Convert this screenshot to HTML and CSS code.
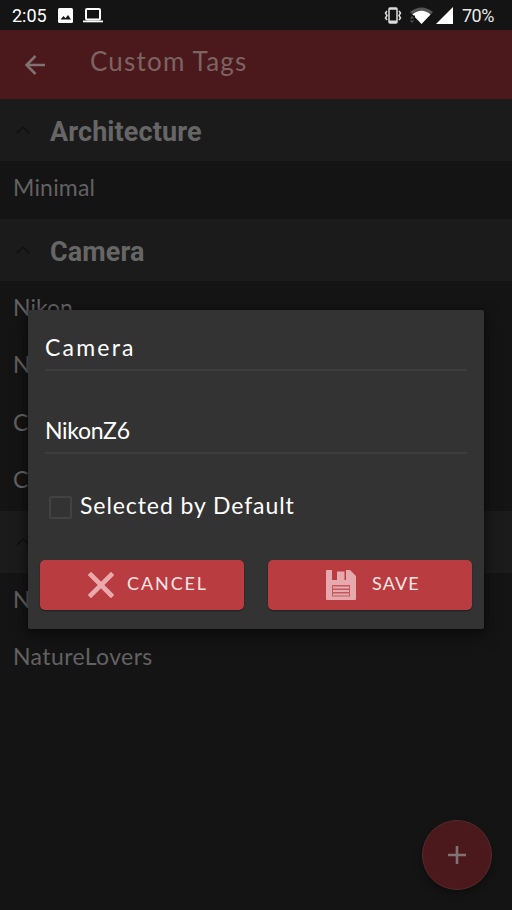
FILE: index.html
```html
<!DOCTYPE html>
<html lang="en">
<head>
<meta charset="utf-8">
<title>Custom Tags</title>
<link rel="stylesheet" href="styles.css">
</head>
<body>
<div class="status">
  <span class="clock">2:05</span>
  <svg class="photo" width="15" height="15" viewBox="0 0 15 15"><rect width="15" height="15" rx="1.5" fill="#fff"/><path d="M2.5 11.5 5.5 8l2 2.2L10 7l3 4.500z" fill="#151515"/></svg>
  <svg class="laptop" width="20" height="15" viewBox="0 0 20 15"><rect x="3" y="1" width="14" height="10.500" rx="1" fill="none" stroke="#fff" stroke-width="2"/><path d="M0 12.500h20v1.800H0z" fill="#fff"/></svg>
  <svg class="vibrate" width="18" height="17" viewBox="0 0 18 17"><rect x="5" y="1" width="8" height="15" rx="1" fill="none" stroke="#ddd" stroke-width="1.500"/><path d="M5 13.500h8V16H5zM5 1h8v1.800H5z" fill="#ddd"/><path d="M3 4 1.500 6 3 8.500 1.500 11 3 13M15 4l1.500 2L15 8.500l1.500 2.500L15 13" fill="none" stroke="#ddd" stroke-width="1.500"/></svg>
  <svg class="wifi" width="23" height="17" viewBox="0 0 23 17"><path d="M0 5Q11.500-4 23 5L11.500 17z" fill="#555"/><path d="M2.500 7.500Q11.500 0 20.500 7.500L11.500 17z" fill="#fff"/><path d="M0 8.500h5v8H0z" fill="#141414"/><path d="M0 11.500h4L2 9zM0 13.500h4L2 16z" fill="#555"/></svg>
  <svg class="signal" width="17" height="17" viewBox="0 0 17 17"><path d="M17 0v17H0z" fill="#fff"/></svg>
  <span class="battery">70%</span>
</div>
<header class="appbar">
  <svg class="back" width="20" height="20" viewBox="0 0 20 20"><path d="M20 10H2M10.500 1 1.500 10l9 9" fill="none" stroke="#807172" stroke-width="2.500"/></svg>
  <h1>Custom Tags</h1>
</header>
<main>
  <h2><svg width="14" height="8" viewBox="0 0 14 8"><path d="m1 7 6-6 6 6"/></svg><span>Architecture</span></h2>
  <p class="tag"><span class="minimal">Minimal</span></p>
  <h2><svg width="14" height="8" viewBox="0 0 14 8"><path d="m1 7 6-6 6 6"/></svg><span>Camera</span></h2>
  <p class="tag"><span class="nikon">Nikon</span></p>
  <p class="tag"><span>N</span></p>
  <p class="tag"><span>C</span></p>
  <p class="tag"><span>C</span></p>
  <h2><svg width="14" height="8" viewBox="0 0 14 8"><path d="m1 7 6-6 6 6"/></svg></h2>
  <p class="tag"><span>N</span></p>
  <p class="tag"><span>NatureLovers</span></p>
</main>
<div class="fab"><svg width="18" height="18" viewBox="0 0 18 18"><path d="M9 0v18M0 9h18" stroke="#837273" stroke-width="2.600"/></svg></div>
<section class="dialog">
  <div class="field"><span class="category">Camera</span></div>
  <div class="field second"><span class="name">NikonZ6</span></div>
  <div class="check"><i></i><span>Selected by Default</span></div>
  <div class="actions">
    <div class="button cancel"><svg width="26" height="26" viewBox="0 0 26 26"><path d="m3 3 20 20M23 3 3 23" stroke="#eaa9ad" stroke-width="4.600" stroke-linecap="square"/></svg><span>CANCEL</span></div>
    <div class="button save"><svg width="30" height="30" viewBox="0 0 30 30"><path d="M1 0h5v10h14V0h4l6 6v23q0 1-1 1H1q-1 0-1-1V1q0-1 1-1z" fill="#e6aaae"/><path d="M11 1.500h7.500v8.500H11z" fill="#e6aaae"/><path d="M6 15h18v11.500H6z" fill="#c3585d"/><path d="M7 17.500h16M7 21h16M7 24.500h16" stroke="#e6aaae" stroke-width="2"/></svg><span>SAVE</span></div>
  </div>
</section>
</body>
</html>
```

FILE: styles.css
```css
* { box-sizing: border-box; }
body { margin: 0; width: 512px; height: 910px; overflow: hidden; background: #141414; color: #626262; font-family: Lato, sans-serif; }
h1, h2, p { margin: 0; font-weight: 400; }
svg { display: block; flex: none; }
span { white-space: nowrap; }

.status { height: 30px; display: flex; align-items: center; padding-left: 12px; color: #fff; font: 400 18px/30px Roboto, sans-serif; }
.clock { width: 46px; padding-top: 2px; }
.laptop { margin-left: 10px; }
.vibrate { margin-left: 281px; }
.wifi { margin-left: 8px; }
.signal { margin-left: 3px; }
.battery { margin-left: 9px; padding-top: 2px; color: #e8e8e8; letter-spacing: -.5px; }

.appbar { height: 69px; display: flex; align-items: flex-start; background: #4b191b; padding-left: 25px; }
.back { margin-top: 25px; }
.appbar h1 { margin: 15px 0 0 45px; color: #7c6364; font-size: 26px; line-height: 32px; letter-spacing: 1.2px; white-space: nowrap; }

main h2 { height: 62px; display: flex; background: #1b1b1b; padding-left: 16px; font: 700 27px/32px Roboto, sans-serif; letter-spacing: .1px; color: #666; }
main h2 svg { margin-top: 27px; fill: none; stroke: #111; stroke-width: 1.700px; }
main h2 span { margin: 17px 0 0 20px; }
.tag { height: 57.500px; padding: 12px 0 0 13px; font-size: 23px; line-height: 28px; letter-spacing: .4px; }
.minimal { letter-spacing: .2px; }
.nikon { letter-spacing: 0; }

.dialog { position: absolute; left: 28px; top: 310px; width: 456px; height: 319px; padding: 0 12px; background: #333; color: #fff; border-radius: 2px; box-shadow: 0 7px 18px rgba(0,0,0,.4), 0 0 5px rgba(0,0,0,.5); font-size: 23px; line-height: 28px; }
.field { height: 61px; margin: 0 5px; padding-top: 23px; border-bottom: 2px solid #3d3d3d; }
.second { height: 83px; padding-top: 45px; }
.category { letter-spacing: 2.2px; }
.name { letter-spacing: -.3px; }
.check { display: flex; height: 106px; padding: 37px 0 0 9px; letter-spacing: .92px; }
.check i { width: 23px; height: 23px; margin: 5px 8px 0 0; border: 2px solid #424242; border-radius: 2px; }
.actions { display: flex; gap: 24px; }
.button { width: 204px; height: 50px; display: flex; align-items: center; background: #b93c40; border-radius: 5px; color: #ffe5e5; font-size: 18px; line-height: 24px; box-shadow: 0 1px 2px rgba(0,0,0,.4); }
.button span { margin-bottom: 5px; }
.cancel { padding-left: 48px; gap: 13px; letter-spacing: 1.9px; }
.save { padding-left: 58px; gap: 16px; letter-spacing: 1.1px; }

.fab { position: absolute; left: 422px; top: 820px; width: 70px; height: 70px; display: flex; align-items: center; justify-content: center; border: 1px solid #552a2c; border-radius: 50%; background: #4b191b; box-shadow: 0 4px 9px rgba(0,0,0,.35); }
```
